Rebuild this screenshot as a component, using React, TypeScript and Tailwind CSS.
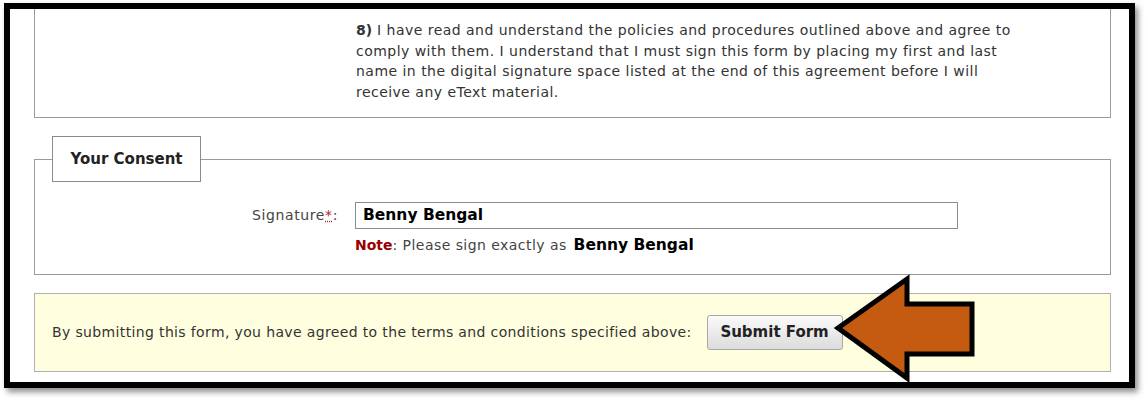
export default function App() {
  return (
    <div
      className="relative w-[1148px] h-[402px] bg-white overflow-hidden"
      style={{ fontFamily: '"DejaVu Sans", Verdana, sans-serif' }}
    >
      {/* Framed screenshot area */}
      <div className="ml-[4px] mt-[3px] w-[1131px] h-[385px] border-[6px] border-black bg-white shadow-[3px_4px_6px_rgba(0,0,0,0.45)] pl-[24px] pr-[18px] flex flex-col">
        {/* Policy item 8 */}
        <div className="border border-t-0 border-[#9a9a9a] pl-[321px] pt-[11px] pb-[15px] text-[14px] leading-[20.5px] tracking-[0.47px] text-[#333] whitespace-nowrap">
          <p>
            <span className="font-bold tracking-normal">8)</span> I have read and understand the policies and procedures outlined above and agree to
            <br />
            comply with them. I understand that I must sign this form by placing my first and last
            <br />
            name in the digital signature space listed at the end of this agreement before I will
            <br />
            receive any eText material.
          </p>
        </div>

        {/* Consent fieldset */}
        <fieldset className="mt-[18px] border border-[#9a9a9a] h-[139px]">
          <legend className="ml-[17px] border border-[#8a8a8a] w-[149px] h-[46px] flex items-center justify-center text-[15px] font-bold text-[#222]">
            Your Consent
          </legend>
          <div className="grid grid-cols-[303px_1fr] gap-x-[17px] mt-[20px]">
            <label className="text-right text-[14px] tracking-[0.6px] text-[#444] self-center">
              Signature
              <span className="text-[#b22222] underline decoration-dotted decoration-[#b22222]">*</span>:
            </label>
            <div className="w-[603px] h-[27px] border border-[#8c8c8c] flex items-center pl-[7px] text-[15.5px] font-bold text-black">
              Benny Bengal
            </div>
            <div />
            <div className="mt-[5px] text-[14px] tracking-[0.45px] text-[#444] flex items-baseline">
              <span className="font-bold text-[#990000] tracking-normal">Note</span>
              <span>: Please sign exactly as&nbsp;</span>
              <span className="ml-[2px] text-[15.5px] tracking-normal font-bold text-black">Benny Bengal</span>
            </div>
          </div>
        </fieldset>

        {/* Submit bar */}
        <div className="mt-[18px] h-[79px] border border-[#b0b0b0] bg-[#ffffe0] flex items-center pl-[17px] text-[14px] text-[#333] whitespace-nowrap">
          <span className="tracking-[0.36px]">By submitting this form, you have agreed to the terms and conditions specified above:</span>
          <button className="ml-[15px] w-[136px] h-[35px] rounded-[3px] border border-[#a8a8a8] bg-gradient-to-b from-[#fafafa] to-[#dcdcdc] text-[15px] font-bold text-[#222]">
            Submit Form
          </button>
        </div>
      </div>

      {/* Callout arrow */}
      <svg className="absolute left-[830px] top-[272px]" width="150" height="114" viewBox="0 0 150 114">
        <polygon
          points="8,56 77,7 77,32 142,32 142,82 77,82 77,106"
          fill="#C55A11"
          stroke="#000"
          strokeWidth="5"
          strokeLinejoin="miter"
        />
      </svg>
    </div>
  );
}
